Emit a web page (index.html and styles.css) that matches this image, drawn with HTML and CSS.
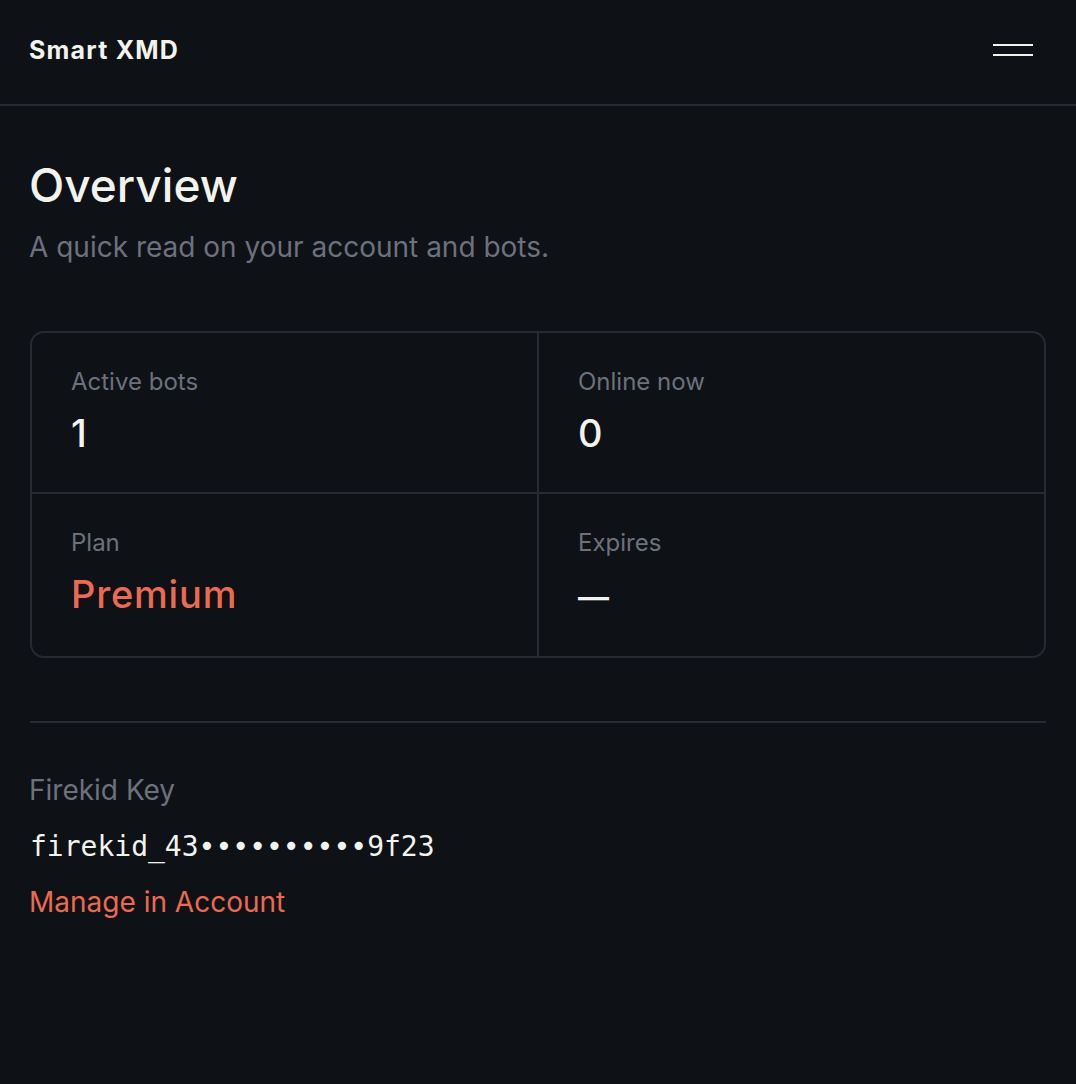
FILE: index.html
```html
<!DOCTYPE html>
<html lang="en">
<head>
<meta charset="utf-8">
<title>Smart XMD — Overview</title>
<link rel="stylesheet" href="styles.css">
</head>
<body>
<header class="topbar">
  <div class="brand">Smart XMD</div>
  <button class="menu" aria-label="Menu"><span></span><span></span></button>
</header>
<main class="page">
  <h1 class="title">Overview</h1>
  <p class="subtitle">A quick read on your account and bots.</p>

  <section class="stats">
    <div class="stat">
      <div class="stat-label">Active bots</div>
      <div class="stat-value">1</div>
    </div>
    <div class="stat">
      <div class="stat-label">Online now</div>
      <div class="stat-value">0</div>
    </div>
    <div class="stat">
      <div class="stat-label">Plan</div>
      <div class="stat-value accent">Premium</div>
    </div>
    <div class="stat">
      <div class="stat-label">Expires</div>
      <div class="stat-value"><span class="dash">—</span></div>
    </div>
  </section>

  <hr class="divider">

  <section class="key">
    <div class="key-label">Firekid Key</div>
    <div class="key-value">firekid_43••••••••••9f23</div>
    <a class="key-link" href="#">Manage in Account</a>
  </section>
</main>
</body>
</html>
```

FILE: styles.css
```css
html, body {
  margin: 0;
  padding: 0;
  background: #0e1116;
  color: #f3f3ee;
  font-family: Inter, "Noto Sans", sans-serif;
}

.topbar {
  height: 106px;
  padding: 0 30px 4px 29px;
  box-sizing: border-box;
  display: flex;
  align-items: center;
  justify-content: space-between;
  border-bottom: 2px solid #272a33;
}

.brand {
  font-size: 25px;
  font-weight: 700;
  letter-spacing: 1.2px;
  color: #f3f3ee;
}

.menu {
  background: none;
  border: 0;
  padding: 0;
  margin-right: 13px;
  width: 40px;
  display: flex;
  flex-direction: column;
  gap: 8px;
  cursor: pointer;
}

.menu span {
  display: block;
  height: 2px;
  width: 40px;
  background: #f3f3ee;
}

.page {
  padding: 50px 30px 40px 29px;
}

.title {
  margin: 0;
  font-size: 46px;
  line-height: 58px;
  font-weight: 500;
  color: #f3f3ee;
}

.subtitle {
  margin: 14px 0 0;
  font-size: 28px;
  line-height: 39px;
  color: #6c717d;
}

.stats {
  margin-top: 64px;
  margin-left: 1px;
  display: grid;
  grid-template-columns: 1fr 1fr;
  gap: 2px;
  background: #272a33;
  border: 2px solid #272a33;
  border-radius: 14px;
  overflow: hidden;
}

.stat {
  background: #0e1116;
  padding: 34px 40px 37px 39px;
}

.stat-label {
  font-size: 24px;
  line-height: 30px;
  color: #6c717d;
}

.stat-value {
  margin-top: 14px;
  font-size: 38px;
  line-height: 44px;
  font-weight: 500;
  color: #f3f3ee;
}

.stat-value.accent {
  letter-spacing: 0.8px;
  color: #eb6a50;
}

.dash {
  font-size: 31px;
  font-weight: 600;
}

.divider {
  margin: 63px 0 0 1px;
  border: 0;
  height: 2px;
  background: #272a33;
}

.key {
  padding-top: 48px;
  display: flex;
  flex-direction: column;
  align-items: flex-start;
}

.key-label {
  font-size: 28px;
  line-height: 39px;
  color: #6c717d;
}

.key-value {
  margin-top: 17px;
  margin-left: 1px;
  font-family: "DejaVu Sans Mono", "Liberation Mono", monospace;
  font-size: 28px;
  line-height: 40px;
  color: #f3f3ee;
}

.key-link {
  margin-top: 16px;
  font-size: 28px;
  line-height: 39px;
  color: #eb6a50;
  text-decoration: none;
}
```
